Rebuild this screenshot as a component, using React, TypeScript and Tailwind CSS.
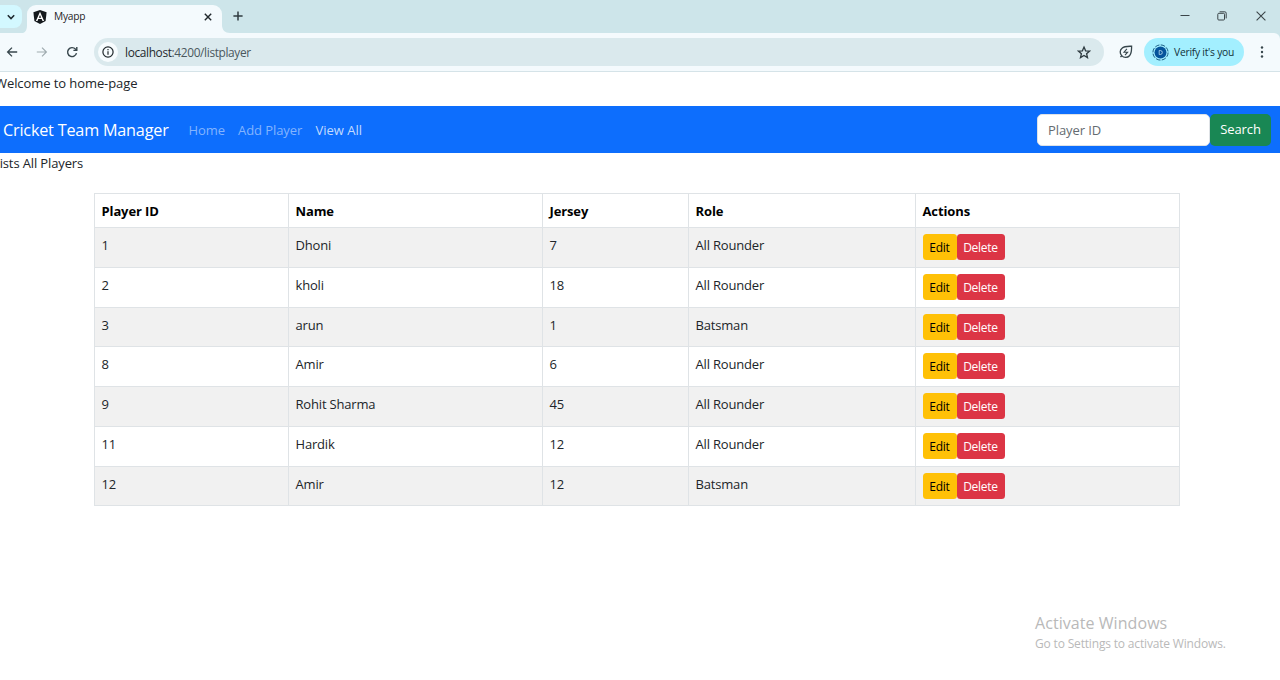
import React from "react";

type Player = { id: number; name: string; jersey: number; role: string; h: string };

const players: Player[] = [
  { id: 1, name: "Dhoni", jersey: 7, role: "All Rounder", h: "h-[40px]" },
  { id: 2, name: "kholi", jersey: 18, role: "All Rounder", h: "h-[40px]" },
  { id: 3, name: "arun", jersey: 1, role: "Batsman", h: "h-[39px]" },
  { id: 8, name: "Amir", jersey: 6, role: "All Rounder", h: "h-[40px]" },
  { id: 9, name: "Rohit Sharma", jersey: 45, role: "All Rounder", h: "h-[40px]" },
  { id: 11, name: "Hardik", jersey: 12, role: "All Rounder", h: "h-[40px]" },
  { id: 12, name: "Amir", jersey: 12, role: "Batsman", h: "h-[39px]" },
];

function TabStrip() {
  return (
    <div className="flex h-[33px] bg-[#cde5ea]">
      <div className="mt-[5px] flex h-[23px] w-[22px] items-center justify-center rounded-r-lg bg-[#d3f8ff]">
        <svg className="h-3 w-3" viewBox="0 0 12 12" fill="none" stroke="#1f2a30" strokeWidth="1.6">
          <path d="M2.8 4.3 6 7.5 9.2 4.3" />
        </svg>
      </div>
      <svg className="ml-px mt-[25px] h-2 w-1" viewBox="0 0 4 8" fill="#f4fafd">
        <path d="M4 0v8H0C3 7 4 4 4 0z" />
      </svg>
      <div className="mt-[5px] flex h-[28px] w-[195px] items-center rounded-t-[9px] bg-[#f4fafd] pl-[6px] pr-[10px] pb-[5px]">
        <svg className="h-[14px] w-[14px]" viewBox="0 0 14 14">
          <path d="M7 0 13.6 2.3 12.6 11 7 14 1.4 11 .4 2.3z" fill="#14191d" />
          <path d="M7 1.7 2.9 10.9h1.6l.8-2h3.4l.8 2h1.6zM7 4.9l1.2 2.8H5.8z" fill="#fff" />
        </svg>
        <span className="ml-[7px] text-[10.2px] tracking-[-0.25px] text-[#1f2528]">Myapp</span>
        <svg className="ml-auto h-2 w-2" viewBox="0 0 8 8" stroke="#20282c" strokeWidth="1.4">
          <path d="M.8.8l6.4 6.4M7.2.8.8 7.2" />
        </svg>
      </div>
      <svg className="mt-[25px] h-2 w-2" viewBox="0 0 8 8" fill="#f4fafd">
        <path d="M0 0v8h8C3 8 0 5 0 0z" />
      </svg>
      <svg className="ml-[3px] mt-[11px] h-[10px] w-[10px]" viewBox="0 0 10 10" stroke="#2f3b40" strokeWidth="1.5">
        <path d="M5 .4v9.2M.4 5h9.2" />
      </svg>
      <div className="ml-auto flex items-start pt-[11px] text-[#3b4549]">
        <svg className="mr-[27px] h-[10px] w-[10px]" viewBox="0 0 10 10" stroke="currentColor">
          <path d="M.5 4.5h9" />
        </svg>
        <svg className="mr-[29px] h-[10px] w-[10px]" viewBox="0 0 10 10" fill="none" stroke="currentColor">
          <rect x=".8" y="2.3" width="6.7" height="6.7" rx="1" />
          <path d="M2.6.8h5.2q1.4 0 1.4 1.4v5.2" />
        </svg>
        <svg className="mr-[14px] h-[10px] w-[10px]" viewBox="0 0 10 10" stroke="currentColor" strokeWidth="1.1">
          <path d="M.6.6l8.8 8.8M9.4.6.6 9.4" />
        </svg>
      </div>
    </div>
  );
}

function Toolbar() {
  return (
    <div className="bg-[#cde5ea]">
      <div className="flex h-[39px] items-center rounded-tr-[6px] border-b border-[#d5e3e8] bg-[#f4fafd] pl-[6px] text-[#37464c]">
        <svg className="h-3 w-3" viewBox="0 0 12 12" fill="none" stroke="currentColor" strokeWidth="1.3">
          <path d="M11.2 6H1.8M6 1.6 1.6 6 6 10.4" />
        </svg>
        <svg className="ml-[18px] h-3 w-3" viewBox="0 0 12 12" fill="none" stroke="#9fabaf" strokeWidth="1.2">
          <path d="M.8 6h9.4M6 1.6 10.4 6 6 10.4" />
        </svg>
        <svg className="ml-[18px] h-3 w-3" viewBox="0 0 12 12" fill="none" stroke="currentColor" strokeWidth="1.4">
          <path d="M10.5 7.2A4.5 4.5 0 1 1 9.4 3L10.600 4.200" />
          <path d="M10.800 1v3.400H7.400" />
        </svg>
        <div className="ml-[16px] flex h-[28px] w-[1010px] items-center rounded-full bg-[#dae9ed] pl-[4px] pr-[13px]">
          <div className="flex h-5 w-5 items-center justify-center rounded-full bg-[#f7fcfe]">
            <svg className="h-3 w-3" viewBox="0 0 12 12" fill="none" stroke="#20282c" strokeWidth="1.2">
              <circle cx="6" cy="6" r="5.1" />
              <path d="M6 5.3v3.4M6 3v1.3" />
            </svg>
          </div>
          <span className="ml-[7px] pt-[2px] text-[11.9px] tracking-[-0.36px] text-[#4a585d]">
            <span className="text-[#1f2a2e]">localhost</span>:4200/listplayer
          </span>
          <svg className="ml-auto h-[14px] w-[14px]" viewBox="0 0 14 14" fill="none" stroke="#2e3b40" strokeWidth="1.3">
            <path d="M7 2.1 8.600 5.800l4 .3-3 2.600.9 3.900L7 10.500l-3.500 2.100.9-3.900-3-2.600 4-.3z" />
          </svg>
        </div>
        <svg className="ml-[15px] h-[14px] w-[14px]" viewBox="0 0 14 14" fill="none" stroke="#37464c" strokeWidth="1.3">
          <path d="M12.6 1.2C9 1.3 5.300 1 3 3.200A5 5 0 0 0 2.700 10.600 5.200 5.200 0 0 0 10.500 10.700C12.900 8.300 12.500 4.500 12.600 1.200zM3 10.300 1.500 12.200" />
          <path d="M7.900 3.800 5 7.200h3.600L6 10.200" strokeWidth="1.100" />
        </svg>
        <div className="ml-[11px] flex h-[28px] w-[100px] items-center rounded-full bg-[#a3efff] pl-[8px]">
          <svg className="h-[17px] w-[17px]" viewBox="0 0 17 17" fill="none">
            <circle cx="8.500" cy="8.500" r="7.600" stroke="#1c5f86" strokeWidth="1" strokeDasharray="4.600 1.370" />
            <circle cx="8.500" cy="8.500" r="6" fill="#05549b" />
            <path d="M7.200 6.500h1.100a2 2 0 0 1 0 4H7.200z" stroke="#a9cfe9" strokeWidth=".9" />
          </svg>
          <span className="ml-[5px] whitespace-nowrap pt-px text-[10.3px] tracking-[-0.25px] text-[#123139]">Verify it's you</span>
        </div>
        <svg className="ml-[16px] h-3 w-1" viewBox="0 0 4 12" fill="#37464c">
          <circle cx="2" cy="1.500" r="1.200" />
          <circle cx="2" cy="6" r="1.200" />
          <circle cx="2" cy="10.500" r="1.200" />
        </svg>
      </div>
    </div>
  );
}

function NavBar() {
  return (
    <nav className="flex h-[47px] items-center bg-[#0d6efd] pl-[3px] pr-[9px]">
      <span className="w-[185.500px] whitespace-nowrap pt-[2px] text-[16.200px] tracking-[-0.190px] text-white">Cricket Team Manager</span>
      <span className="w-[49.500px] whitespace-nowrap pt-[2px] tracking-[-0.080px] text-[#83b4fe]">Home</span>
      <span className="w-[77.500px] whitespace-nowrap pt-[2px] tracking-[-0.080px] text-[#83b4fe]">Add Player</span>
      <span className="whitespace-nowrap pt-[2px] tracking-[0px] text-[#c2dbfe]">View All</span>
      <div className="ml-auto flex">
        <input
          className="h-[32px] w-[173px] rounded-[5px] border border-[#dee2e6] bg-white px-[10px] text-[13px] tracking-[-0.100px] placeholder:text-[#646b71]"
          placeholder="Player ID"
        />
        <button className="h-[32px] w-[61px] rounded-[5px] bg-[#198754] pt-px tracking-[-0.100px] text-white">Search</button>
      </div>
    </nav>
  );
}

const cell = "border border-[#dfe3e6] px-[6.500px] align-top";

function PlayersTable() {
  return (
    <table className="ml-[94px] mt-[19px] w-[1086px] table-fixed border-collapse text-[#212529]">
      <colgroup>
        <col className="w-[194px]" />
        <col className="w-[254px]" />
        <col className="w-[146px]" />
        <col className="w-[227px]" />
        <col className="w-[264px]" />
      </colgroup>
      <thead>
        <tr className="h-[34px] text-left text-black">
          {["Player ID", "Name", "Jersey", "Role", "Actions"].map((h) => (
            <th key={h} className={`${cell} pt-[7px] leading-[20px] font-bold tracking-[-0.120px]`}>{h}</th>
          ))}
        </tr>
      </thead>
      <tbody>
        {players.map((p) => (
          <tr key={p.id} className={`${p.h} odd:bg-[#f1f1f1]`}>
            {[p.id, p.name, p.jersey, p.role].map((v, i) => (
              <td key={i} className={`${cell} pt-[7px] leading-[20px] tracking-[-0.180px]`}>{v}</td>
            ))}
            <td className={`${cell} pt-[6px]`}>
              <div className="flex text-[12px] tracking-[-0.250px]">
                <button className="h-[26px] w-[34px] rounded-[3.500px] bg-[#ffc107] pt-px text-black">Edit</button>
                <button className="h-[26px] w-[48px] rounded-[3.500px] bg-[#dc3545] pt-px text-white">Delete</button>
              </div>
            </td>
          </tr>
        ))}
      </tbody>
    </table>
  );
}

export default function App() {
  return (
    <div className="relative h-[680px] w-[1280px] overflow-hidden bg-white font-['Open_Sans','Noto_Sans',sans-serif] text-[13px]">
      <TabStrip />
      <Toolbar />
      <main className="text-[#212529]">
        <p className="ml-[-5px] h-[34px] pt-px leading-[20px] tracking-[-0.080px]">Welcome to home-page</p>
        <NavBar />
        <p className="ml-[-7px] h-[21px] leading-[20px] tracking-[-0.130px]">Lists All Players</p>
        <PlayersTable />
      </main>
      <div className="absolute left-[1035px] top-[612px] whitespace-nowrap text-[#b9b9b9]">
        <div className="text-[16px] leading-[22px] tracking-[0.060px]">Activate Windows</div>
        <div className="pt-px text-[12px] leading-[18px] tracking-[-0.170px]">Go to Settings to activate Windows.</div>
      </div>
    </div>
  );
}
